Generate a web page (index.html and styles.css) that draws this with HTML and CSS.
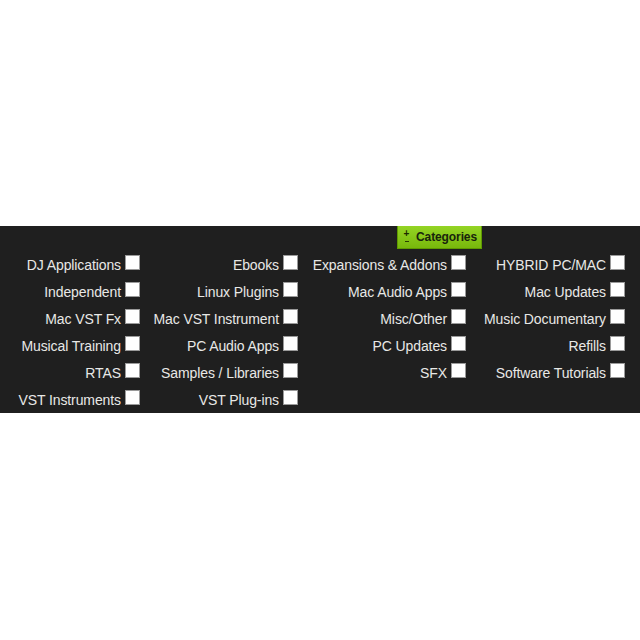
FILE: index.html
```html
<!DOCTYPE html>
<html>
<head>
<meta charset="utf-8">
<link rel="stylesheet" href="styles.css">
</head>
<body>
<div class="panel">
  <div class="panel-head">
    <div class="cat-btn">
      <span class="pm"><span class="p">+</span><span class="m"></span></span>
      <span class="cat-label">Categories</span>
    </div>
  </div>
  <div class="grid">
    <label class="item">DJ Applications<span class="box"></span></label>
    <label class="item">Ebooks<span class="box"></span></label>
    <label class="item">Expansions &amp; Addons<span class="box"></span></label>
    <label class="item">HYBRID PC/MAC<span class="box"></span></label>

    <label class="item">Independent<span class="box"></span></label>
    <label class="item">Linux Plugins<span class="box"></span></label>
    <label class="item">Mac Audio Apps<span class="box"></span></label>
    <label class="item">Mac Updates<span class="box"></span></label>

    <label class="item">Mac VST Fx<span class="box"></span></label>
    <label class="item">Mac VST Instrument<span class="box"></span></label>
    <label class="item">Misc/Other<span class="box"></span></label>
    <label class="item">Music Documentary<span class="box"></span></label>

    <label class="item">Musical Training<span class="box"></span></label>
    <label class="item">PC Audio Apps<span class="box"></span></label>
    <label class="item">PC Updates<span class="box"></span></label>
    <label class="item">Refills<span class="box"></span></label>

    <label class="item">RTAS<span class="box"></span></label>
    <label class="item">Samples / Libraries<span class="box"></span></label>
    <label class="item">SFX<span class="box"></span></label>
    <label class="item">Software Tutorials<span class="box"></span></label>

    <label class="item">VST Instruments<span class="box"></span></label>
    <label class="item">VST Plug-ins<span class="box"></span></label>
  </div>
</div>
</body>
</html>
```

FILE: styles.css
```css
html, body {
  margin: 0;
  padding: 0;
  background: #ffffff;
}
body {
  padding-top: 226px;
  font-family: "Liberation Sans", Arial, sans-serif;
}
.panel {
  background: #1f1f1f;
  height: 187px;
  box-sizing: border-box;
}
.panel-head {
  height: 24px;
  padding-left: 397px;
}
.cat-btn {
  display: flex;
  align-items: center;
  height: 23px;
  width: 85px;
  box-sizing: border-box;
  background: linear-gradient(#94d424, #78b80c);
  border: 1px solid #5f9a00;
  border-top: none;
  padding-left: 5px;
  gap: 6px;
}
.pm {
  display: flex;
  flex-direction: column;
  align-items: center;
  width: 7px;
  height: 16px;
}
.p {
  font-size: 10px;
  line-height: 9px;
  height: 9px;
  font-weight: bold;
  color: #1c2a00;
}
.m {
  display: block;
  width: 4px;
  height: 1px;
  margin-top: 3px;
  background: #2a3d00;
}
.cat-label {
  font-size: 12px;
  color: #18240c;
  font-weight: bold;
  letter-spacing: -0.1px;
}
.grid {
  display: grid;
  grid-template-columns: 140px 158px 168px 159px;
  grid-auto-rows: 27px;
  padding-top: 1px;
}
.item {
  display: flex;
  justify-content: flex-end;
  align-items: center;
  color: #e8e8e6;
  font-size: 14px;
  letter-spacing: -0.1px;
  white-space: nowrap;
}
.box {
  display: inline-block;
  width: 13px;
  height: 13px;
  background: #ffffff;
  border: 1px solid #9a9a9a;
  margin-left: 4px;
  position: relative;
  top: -2px;
}
```
